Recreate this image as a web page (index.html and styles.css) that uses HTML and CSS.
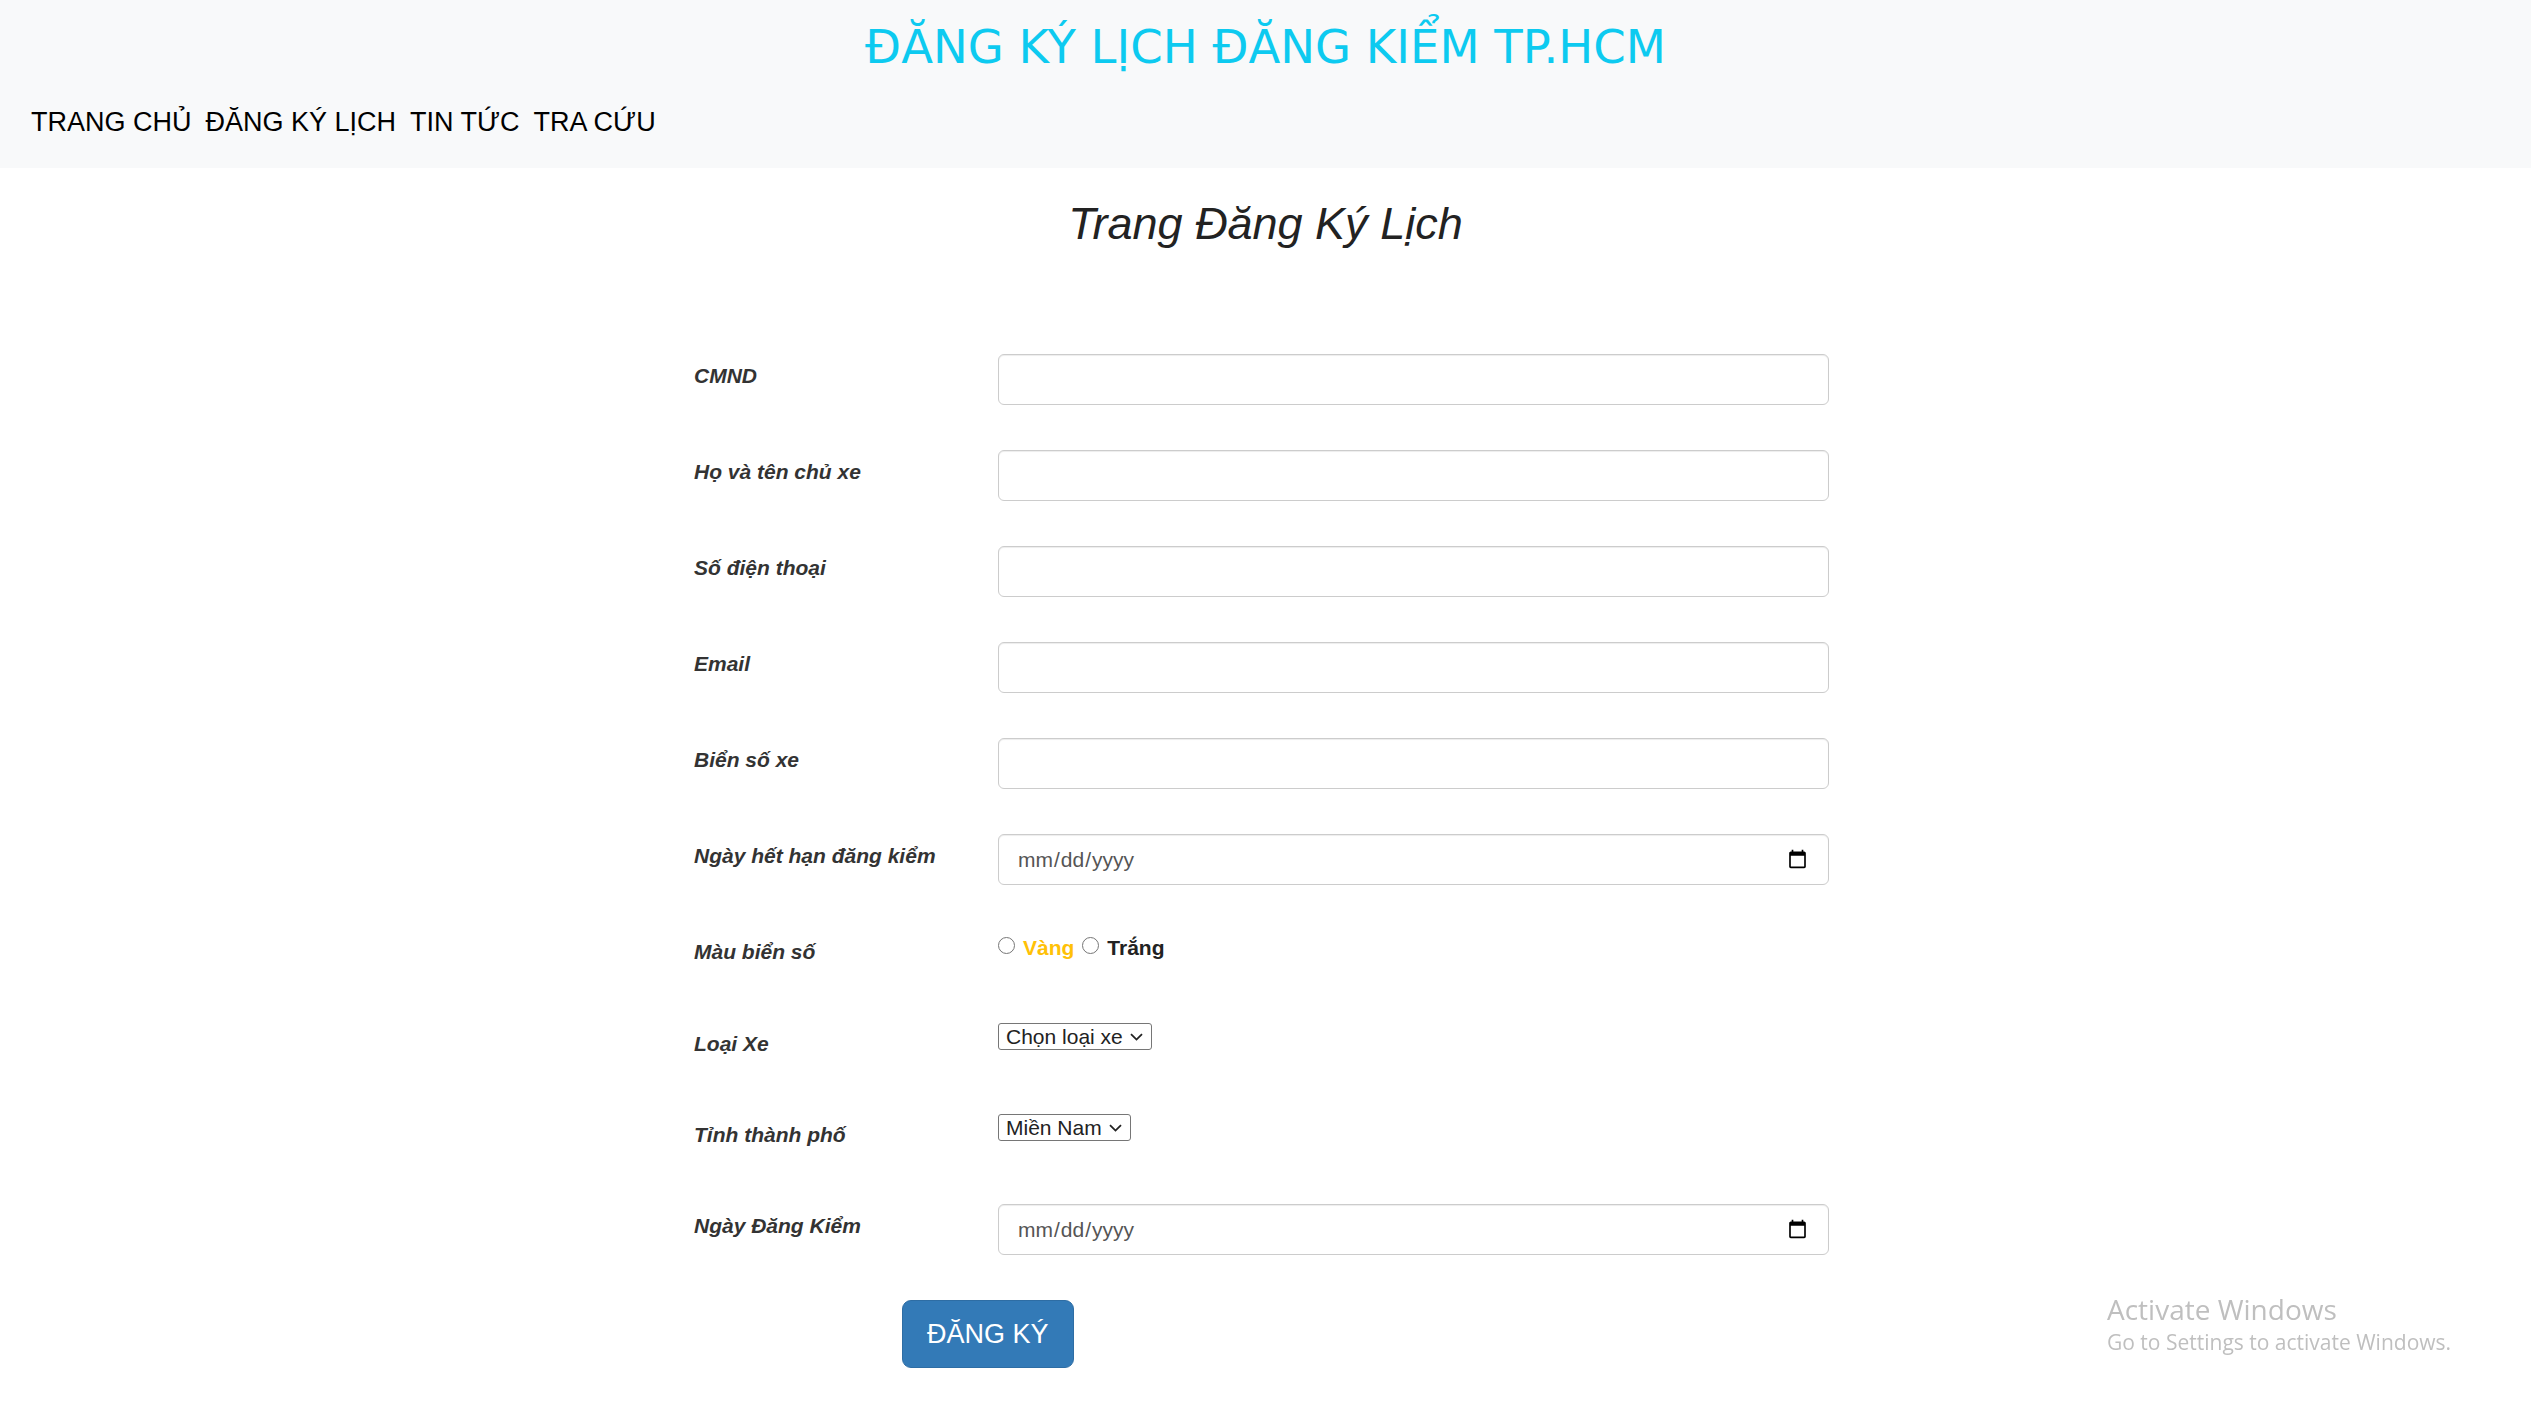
FILE: index.html
```html
<!DOCTYPE html>
<html lang="vi">
<head>
<meta charset="utf-8">
<title>Đăng ký lịch đăng kiểm</title>
<link rel="stylesheet" href="styles.css">
</head>
<body>
<header class="site-header">
  <h1 class="site-title">ĐĂNG KÝ LỊCH ĐĂNG KIỂM TP.HCM</h1>
  <nav class="main-nav">
    <a href="#">TRANG CHỦ</a>
    <a href="#">ĐĂNG KÝ LỊCH</a>
    <a href="#">TIN TỨC</a>
    <a href="#">TRA CỨU</a>
  </nav>
</header>
<main class="page">
  <h2 class="page-title">Trang Đăng Ký Lịch</h2>
  <form class="reg-form">
    <div class="form-row">
      <label class="form-label">CMND</label>
      <div class="form-field"><input class="form-input" type="text"></div>
    </div>
    <div class="form-row">
      <label class="form-label">Họ và tên chủ xe</label>
      <div class="form-field"><input class="form-input" type="text"></div>
    </div>
    <div class="form-row">
      <label class="form-label">Số điện thoại</label>
      <div class="form-field"><input class="form-input" type="text"></div>
    </div>
    <div class="form-row">
      <label class="form-label">Email</label>
      <div class="form-field"><input class="form-input" type="text"></div>
    </div>
    <div class="form-row">
      <label class="form-label">Biển số xe</label>
      <div class="form-field"><input class="form-input" type="text"></div>
    </div>
    <div class="form-row">
      <label class="form-label">Ngày hết hạn đăng kiểm</label>
      <div class="form-field"><input class="form-input" type="date"></div>
    </div>
    <div class="form-row form-row-radio">
      <label class="form-label">Màu biển số</label>
      <div class="form-field radio-group">
        <input class="radio" type="radio" name="mau"><span class="opt opt-yellow">Vàng</span>
        <input class="radio" type="radio" name="mau"><span class="opt opt-white">Trắng</span>
      </div>
    </div>
    <div class="form-row">
      <label class="form-label">Loại Xe</label>
      <div class="form-field">
        <select class="form-select"><option>Chọn loại xe</option></select>
      </div>
    </div>
    <div class="form-row">
      <label class="form-label">Tỉnh thành phố</label>
      <div class="form-field">
        <select class="form-select"><option>Miền Nam</option></select>
      </div>
    </div>
    <div class="form-row">
      <label class="form-label">Ngày Đăng Kiểm</label>
      <div class="form-field"><input class="form-input" type="date"></div>
    </div>
    <div class="form-actions">
      <button class="btn-submit" type="button">ĐĂNG KÝ</button>
    </div>
  </form>
</main>
<div class="win-watermark">
  <div class="win-title">Activate Windows</div>
  <div class="win-sub">Go to Settings to activate Windows.</div>
</div>
</body>
</html>
```
FILE: styles.css
```css
html, body {
  margin: 0;
  padding: 0;
  background: #fff;
}

body {
  font-family: "Liberation Sans", Arial, sans-serif;
  font-size: 21px;
  line-height: 30px;
  color: #333;
}

.site-header {
  background: #f8f9fa;
  height: 168px;
  box-sizing: border-box;
  padding: 20px 31px 0;
}

.site-title {
  margin: 0;
  text-align: center;
  font-family: "DejaVu Sans", sans-serif;
  font-size: 46.5px;
  font-weight: normal;
  line-height: 54px;
  color: #0dcaf0;
}

.main-nav {
  display: flex;
  gap: 14px;
  margin-top: 29px;
  font-size: 27px;
  line-height: 39px;
}

.main-nav a {
  color: #000;
  text-decoration: none;
}

.page-title {
  margin: 32px 0 0;
  text-align: center;
  font-size: 45px;
  font-style: italic;
  font-weight: normal;
  line-height: 48px;
  color: #222;
}

.reg-form {
  width: 1143px;
  margin: 106px auto 0;
}

.form-row {
  display: flex;
  align-items: flex-start;
  min-height: 46px;
  margin-bottom: 45px;
}

.form-row-radio {
  min-height: 47px;
}

.form-label {
  width: 304px;
  flex: none;
  padding-top: 7px;
  font-weight: bold;
  font-style: italic;
  color: #333;
}

.form-field {
  width: 831px;
}

.form-input {
  display: block;
  box-sizing: border-box;
  width: 100%;
  height: 51px;
  padding: 9px 18px;
  font-family: inherit;
  font-size: 21px;
  line-height: 30px;
  color: #555;
  background: #fff;
  border: 1px solid #ccc;
  border-radius: 6px;
  box-shadow: inset 0 1px 1px rgba(0, 0, 0, 0.075);
}

.radio-group {
  display: flex;
  align-items: flex-start;
  padding-top: 3px;
  font-weight: bold;
}

.radio {
  width: 17px;
  height: 17px;
  margin: 4px 8px 0 0;
  flex: none;
}

.opt-yellow {
  color: #ffc107;
  margin-right: 8px;
}

.opt-white {
  color: #222;
}

.form-select {
  -webkit-appearance: none;
  appearance: none;
  box-sizing: border-box;
  height: 27px;
  padding: 0 28px 0 7px;
  font-family: "Liberation Sans", Arial, sans-serif;
  font-size: 21px;
  line-height: 25px;
  color: #222;
  background-color: #fff;
  background-image: url("data:image/svg+xml,%3Csvg xmlns='http://www.w3.org/2000/svg' width='13' height='8' viewBox='0 0 13 8'%3E%3Cpath d='M1 1.2 L6.5 6.6 L12 1.2' fill='none' stroke='%23222' stroke-width='1.8'/%3E%3C/svg%3E");
  background-repeat: no-repeat;
  background-position: right 8px center;
  border: 1px solid #767676;
  border-radius: 3px;
}

.form-actions {
  padding-left: 208px;
}

.btn-submit {
  font-family: "Liberation Sans", Arial, sans-serif;
  font-size: 27px;
  line-height: 36px;
  padding: 15px 24px;
  color: #fff;
  background: #337ab7;
  border: 1px solid #2e6da4;
  border-radius: 9px;
  cursor: pointer;
}

.win-watermark {
  position: fixed;
  left: 2107px;
  top: 1291px;
  font-family: "Open Sans", sans-serif;
  color: #bfbfbf;
}

.win-title {
  font-size: 28px;
  line-height: 36px;
}

.win-sub {
  font-size: 21px;
  line-height: 30px;
}
```
